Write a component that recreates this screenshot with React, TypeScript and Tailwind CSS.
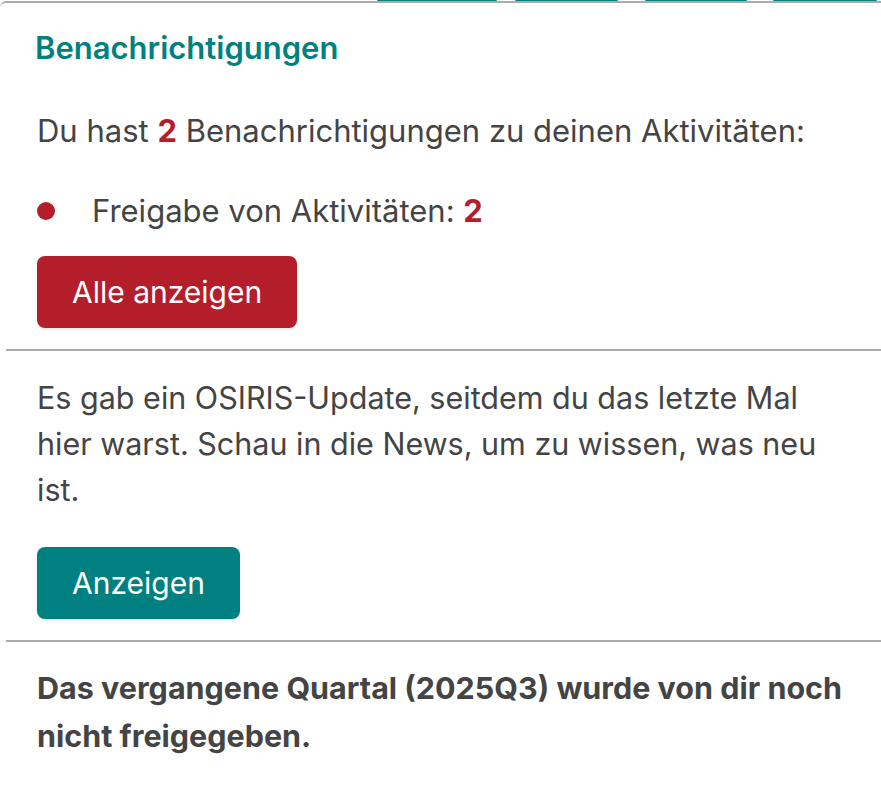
export default function App() {
  const tabs = [
    { left: 'ml-[377px]', w: 'w-[120px]' },
    { left: 'ml-[18px]', w: 'w-[103px]' },
    { left: 'ml-[27px]', w: 'w-[102px]' },
    { left: 'ml-[26px]', w: 'w-[104px]' },
  ]

  return (
    <main className="min-h-screen bg-white font-['Inter',sans-serif] text-[#444444]">
      <div className="flex h-px">
        {tabs.map((t, i) => (
          <span key={i} className={`${t.left} ${t.w} h-px rounded-b-sm bg-[#0a8080]`} />
        ))}
      </div>

      <section className="rounded-tl-md border-t-2 border-[#ababab] pb-10">
        <h2 className="px-[35px] pt-[27px] text-[31px] font-semibold leading-[36px] text-[#008080]">
          Benachrichtigungen
        </h2>

        <div className="pl-[37px] pr-[16px]">
          <p className="mt-[45px] text-[31px] leading-[40px]">
            Du hast <b className="font-bold text-[#b41e2a]">2</b> Benachrichtigungen zu deinen Aktivitäten:
          </p>

          <ul className="mt-[40px]">
            <li className="flex items-center text-[31px] leading-[40px]">
              <span className="h-[18px] w-[18px] shrink-0 rounded-full bg-[#b41e2a]" />
              <span className="ml-[37px]">
                Freigabe von Aktivitäten: <b className="font-bold text-[#b41e2a]">2</b>
              </span>
            </li>
          </ul>

          <button className="mt-[25px] h-[72px] rounded-lg bg-[#b41e2a] px-[35px] text-[30px] text-white shadow-[0_2px_3px_rgba(0,0,0,0.08)]">
            Alle anzeigen
          </button>
        </div>

        <hr className="ml-[6px] mt-[21px] border-t-2 border-[#ababab]" />

        <div className="pl-[37px] pr-[16px]">
          <p className="mt-[24px] max-w-[800px] text-[30.5px] leading-[46px]">
            Es gab ein OSIRIS-Update, seitdem du das letzte Mal hier warst. Schau in die News, um zu wissen, was neu ist.
          </p>

          <button className="mt-[34px] h-[72px] rounded-lg bg-[#008080] px-[35px] text-[30px] text-white shadow-[0_2px_3px_rgba(0,0,0,0.08)]">
            Anzeigen
          </button>
        </div>

        <hr className="ml-[6px] mt-[21px] border-t-2 border-[#ababab]" />

        <div className="pl-[37px] pr-[16px]">
          <p className="mt-[22px] text-[30.5px] font-bold leading-[48px]">
            Das vergangene Quartal (2025Q3) wurde von dir noch nicht freigegeben.
          </p>
        </div>
      </section>
    </main>
  )
}
